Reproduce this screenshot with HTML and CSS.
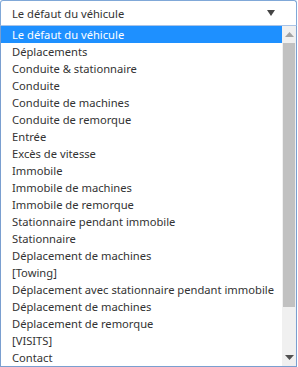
FILE: index.html
```html
<!DOCTYPE html>
<html lang="fr">
<head>
<meta charset="utf-8">
<link rel="stylesheet" href="styles.css">
</head>
<body>
<div class="dropdown">
  <div class="select">
    <span class="value">Le défaut du véhicule</span>
    <svg class="caret" width="8" height="6" viewBox="0 0 8 6"><path d="M0 0H8L4 6Z" fill="#444"/></svg>
  </div>
  <div class="list">
    <ul class="options">
      <li class="opt selected">Le défaut du véhicule</li>
      <li class="opt">Déplacements</li>
      <li class="opt">Conduite &amp; stationnaire</li>
      <li class="opt">Conduite</li>
      <li class="opt">Conduite de machines</li>
      <li class="opt">Conduite de remorque</li>
      <li class="opt">Entrée</li>
      <li class="opt">Excès de vitesse</li>
      <li class="opt">Immobile</li>
      <li class="opt">Immobile de machines</li>
      <li class="opt">Immobile de remorque</li>
      <li class="opt">Stationnaire pendant immobile</li>
      <li class="opt">Stationnaire</li>
      <li class="opt">Déplacement de machines</li>
      <li class="opt">[Towing]</li>
      <li class="opt">Déplacement avec stationnaire pendant immobile</li>
      <li class="opt">Déplacement de machines</li>
      <li class="opt">Déplacement de remorque</li>
      <li class="opt">[VISITS]</li>
      <li class="opt">Contact</li>
    </ul>
    <div class="scrollbar">
      <svg class="arrow" width="9" height="5" viewBox="0 0 9 5"><path d="M0 5H9L4.5 0Z" fill="#a3a3a3"/></svg>
      <div class="track"><div class="thumb"></div></div>
      <svg class="arrow" width="9" height="5" viewBox="0 0 9 5"><path d="M0 0H9L4.5 5Z" fill="#505050"/></svg>
    </div>
  </div>
</div>
</body>
</html>
```
FILE: styles.css
```css
html, body {
  margin: 0;
  padding: 0;
  background: #fff;
}
body {
  font-family: "Noto Sans", "Open Sans", sans-serif;
  font-size: 11.2px;
  color: #333;
}
.dropdown {
  width: 297px;
  display: flex;
  flex-direction: column;
}
.select {
  height: 26px;
  box-sizing: border-box;
  border: 1px solid #80a8d8;
  border-bottom-color: #a9c3e6;
  border-radius: 3px 3px 0 0;
  display: flex;
  align-items: center;
  justify-content: space-between;
  padding: 0 21px 0 11px;
  line-height: 17px;
}
.value {
  color: #333;
}
.caret {
  display: block;
}
.list {
  height: 341px;
  box-sizing: border-box;
  border: 1px solid #7a9fd0;
  border-top: none;
  display: flex;
  width: 297px;
}
.options {
  list-style: none;
  margin: 0;
  padding: 0;
  flex: 1;
  min-width: 0;
  overflow: hidden;
}
.opt {
  height: 17px;
  line-height: 17px;
  padding-left: 11px;
  white-space: nowrap;
  color: #333;
}
.opt.selected {
  background: #1e90ff;
  color: #fff;
}
.scrollbar {
  flex: 0 0 14px;
  width: 14px;
  background: #f0f0f0;
  display: flex;
  flex-direction: column;
  align-items: center;
}
.arrow {
  display: block;
  margin: 6px 0;
}
.track {
  flex: 1;
  width: 100%;
  display: flex;
  flex-direction: column;
}
.thumb {
  margin: 0 1px;
  height: 264px;
  background: #c1c1c1;
}
```
